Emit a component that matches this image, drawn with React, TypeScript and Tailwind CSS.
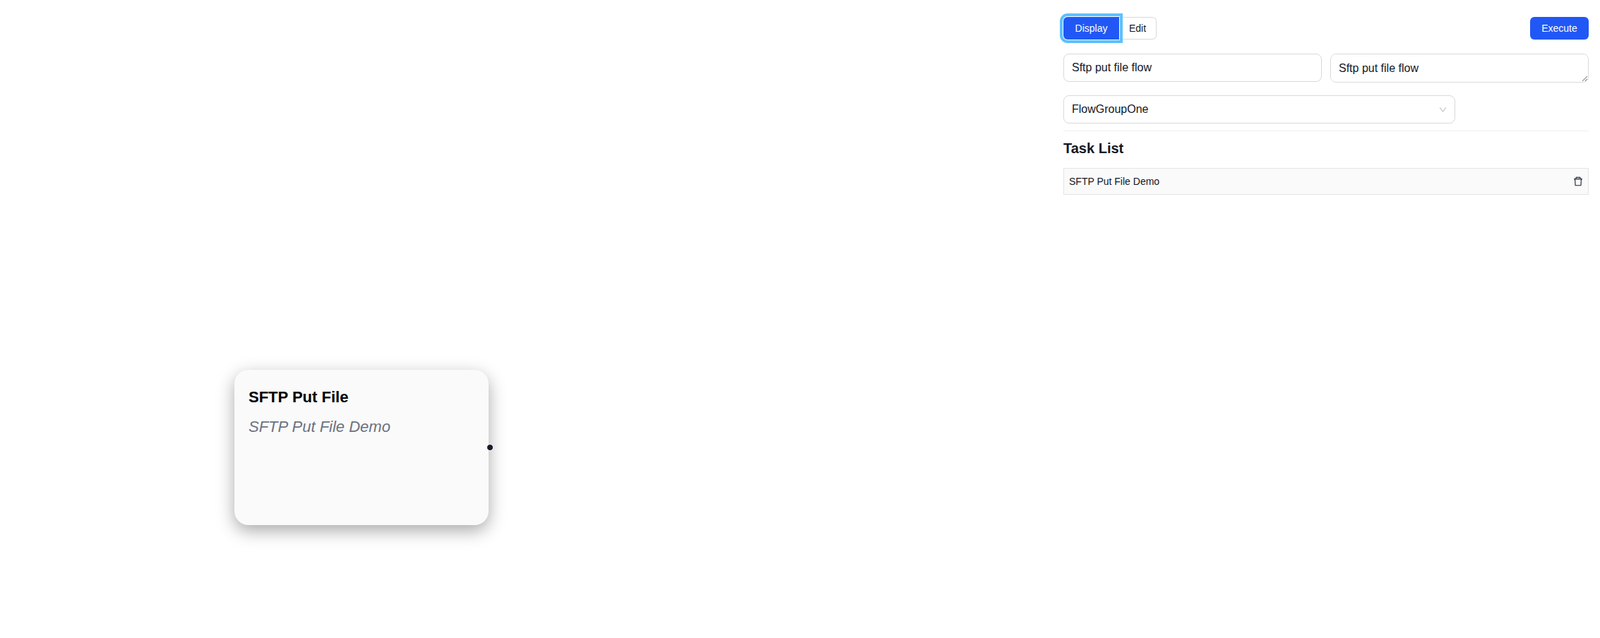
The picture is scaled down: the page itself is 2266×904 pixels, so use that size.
import { AiOutlineDelete, AiOutlineDown } from "react-icons/ai";

const field = "rounded-lg border border-[#d9d9d9] bg-white px-[11px] text-base text-[#111827] outline-none";

function FlowNode() {
    return (
        <div className="absolute left-[332px] top-[524px] h-[220px] w-[360px] rounded-[20px] bg-[#fafafa] p-5 shadow-[0_8px_24px_rgba(0,0,0,0.34)]">
            <div className="mt-[3px] text-[22px] leading-[32px] font-bold text-black">SFTP Put File</div>
            <div className="mt-[10px] text-[22px] leading-[32px] text-[#6b7280] italic">SFTP Put File Demo</div>
            {/* source handle */}
            <div className="absolute right-[-7px] top-[105px] size-[10px] rounded-full border border-white bg-[#1a192b]"></div>
        </div>
    );
}

export default function App() {
    return (
        <div className="flex h-screen bg-white font-['Liberation_Sans',Arial,sans-serif] text-[#111827]">
            <div className="relative flex-1">
                <FlowNode />
            </div>

            <div className="w-[776px] px-4 pt-6">
                <div className="flex items-center justify-between">
                    <div className="flex">
                        <button className="relative z-10 h-8 w-[79px] rounded-l-md bg-[#2158f5] text-sm text-white outline-4 outline-offset-1 outline-[#5cc0ff]">
                            Display
                        </button>
                        <button className="h-8 w-[53px] rounded-r-md border border-l-0 border-[#d9d9d9] bg-white text-sm">
                            Edit
                        </button>
                    </div>
                    <button className="h-8 w-[83px] rounded-md bg-[#2158f5] text-sm text-white shadow-[0_2px_0_rgba(5,145,255,0.1)]">
                        Execute
                    </button>
                </div>

                <div className="mt-5 flex items-start gap-3">
                    <input className={`${field} h-10 w-[366px]`} defaultValue="Sftp put file flow" />
                    <textarea className={`${field} h-[41px] flex-1 py-2 leading-6`} defaultValue="Sftp put file flow" />
                </div>

                <div className="mt-[18px] flex h-10 w-[555px] items-center justify-between rounded-lg border border-[#d9d9d9] bg-white pr-[10px] pl-[11px] text-base">
                    <span>FlowGroupOne</span>
                    <AiOutlineDown className="text-[13px] text-black/25" />
                </div>

                <hr className="mt-[10px] border-[#f0f0f0]" />

                <h3 className="mt-2 text-xl leading-[32px] font-semibold">Task List</h3>

                <div className="mt-3 flex h-[38px] items-center justify-between border border-[#e5e5e5] bg-[#fafafa] pr-[6px] pl-[7px] text-sm">
                    <span>SFTP Put File Demo</span>
                    <AiOutlineDelete className="text-base text-[#1a2234]" />
                </div>
            </div>
        </div>
    );
}
